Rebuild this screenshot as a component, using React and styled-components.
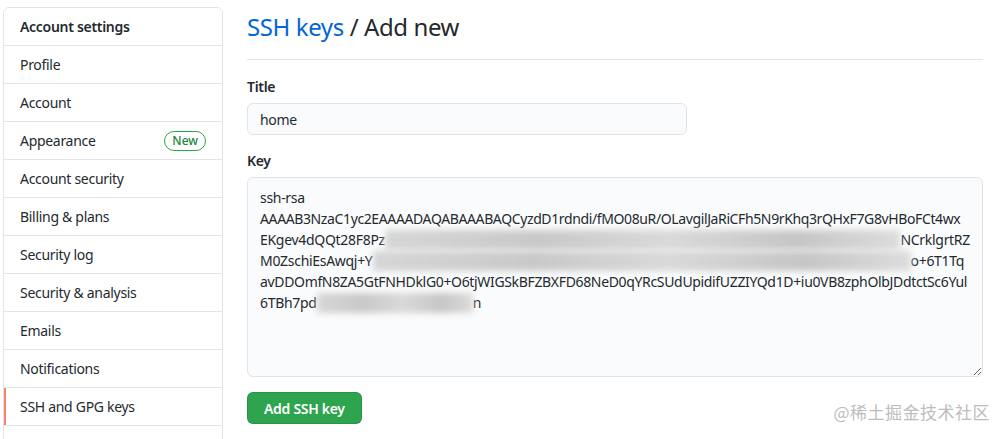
import React from 'react';
import styled, { createGlobalStyle } from 'styled-components';

const GlobalStyle = createGlobalStyle`
  html, body {
    margin: 0;
    padding: 0;
    background: #fff;
  }
  body {
    font-family: "Noto Sans", "Open Sans", "Liberation Sans", sans-serif;
    font-size: 14px;
    letter-spacing: -0.3px;
    color: #24292e;
  }
  * { box-sizing: border-box; }
`;

const menu = [
    'Profile',
    'Account',
    'Appearance',
    'Account security',
    'Billing & plans',
    'Security log',
    'Security & analysis',
    'Emails',
    'Notifications',
    'SSH and GPG keys',
    '',
];

const App = () => {
    return (
        <Page>
            <GlobalStyle />
            <Sidebar>
                <MenuHeading>Account settings</MenuHeading>
                {menu.map((item, i) => (
                    <MenuItem key={i} $selected={item === 'SSH and GPG keys'}>
                        {item}
                        {item === 'Appearance' && <Badge>New</Badge>}
                    </MenuItem>
                ))}
            </Sidebar>

            <Main>
                <Subhead>
                    <Crumb href="#">SSH keys</Crumb> / Add new
                </Subhead>

                <Field>
                    <Label>Title</Label>
                    <Input defaultValue="home" />
                </Field>

                <Field>
                    <Label>Key</Label>
                    <KeyBox>
                        <KeyLine>ssh-rsa</KeyLine>
                        <KeyLine $spacing="-0.38px">AAAAB3NzaC1yc2EAAAADAQABAAABAQCyzdD1rdndi/fMO08uR/OLavgilJaRiCFh5N9rKhq3rQHxF7G8vHBoFCt4wx</KeyLine>
                        <KeyLine>
                            EKgev4dQQt28F8Pz<Blur $w="520px" />NCrklgrtRZ
                        </KeyLine>
                        <KeyLine>
                            M0ZschiEsAwqj+Y<Blur $w="538px" />o+6T1Tq
                        </KeyLine>
                        <KeyLine $spacing="-0.34px">avDDOmfN8ZA5GtFNHDklG0+O6tjWIGSkBFZBXFD68NeD0qYRcSUdUpidifUZZIYQd1D+iu0VB8zphOlbJDdtctSc6Yul</KeyLine>
                        <KeyLine>
                            6TBh7pd<Blur $w="156px" />n
                        </KeyLine>
                    </KeyBox>
                </Field>

                <Button>Add SSH key</Button>
            </Main>

            <Watermark>@稀土掘金技术社区</Watermark>
        </Page>
    );
};

const Page = styled.div`
  position: relative;
  display: flex;
  gap: 24px;
  padding: 7px 22px 0 3px;
  height: 439px;
  overflow: hidden;
`;

const Sidebar = styled.nav`
  width: 220px;
  flex-shrink: 0;
  align-self: flex-start;
  border: 1px solid #e1e4e8;
  border-radius: 6px;
  background: #fff;
`;

const MenuItem = styled.div`
  display: flex;
  align-items: center;
  justify-content: space-between;
  min-height: 38px;
  padding: 8px 16px;
  line-height: 21px;
  border-bottom: 1px solid #e1e4e8;
  color: #24292e;
  box-shadow: ${(p) => (p.$selected ? 'inset 2px 0 0 #f9826c' : 'none')};
`;

const MenuHeading = styled(MenuItem)`
  font-weight: 600;
`;

const Badge = styled.span`
  display: inline-block;
  padding: 0 7px;
  font-size: 12px;
  font-weight: 500;
  letter-spacing: 0;
  line-height: 18px;
  color: #22863a;
  border: 1px solid #28a745;
  border-radius: 2em;
`;

const Main = styled.main`
  flex: 1;
  min-width: 0;
`;

const Subhead = styled.h2`
  margin: 0 0 17px;
  padding-bottom: 12px;
  font-size: 24px;
  font-weight: 400;
  letter-spacing: -0.4px;
  line-height: 40px;
  border-bottom: 1px solid #e1e4e8;
`;

const Crumb = styled.a`
  color: #0366d6;
  text-decoration: none;
`;

const Field = styled.div`
  margin-bottom: 16px;
`;

const Label = styled.label`
  display: block;
  margin-bottom: 6px;
  font-weight: 600;
  line-height: 20px;
`;

const Input = styled.input`
  display: block;
  width: 440px;
  height: 32px;
  padding: 5px 12px;
  font: inherit;
  letter-spacing: inherit;
  color: #24292e;
  background: #fafbfc;
  border: 1px solid #e1e4e8;
  border-radius: 6px;
  outline: none;
`;

const KeyBox = styled.div`
  height: 200px;
  padding: 9px 12px;
  background: #fafbfc;
  border: 1px solid #e1e4e8;
  border-radius: 6px;
  overflow: hidden;
  resize: both;
`;

const KeyLine = styled.div`
  display: flex;
  align-items: center;
  white-space: nowrap;
  line-height: 21px;
  letter-spacing: ${(p) => p.$spacing || 'inherit'};
`;

const Blur = styled.span`
  display: inline-block;
  width: ${(p) => p.$w};
  height: 20px;
  background: linear-gradient(90deg, #d6d6d6, #c9c9c9 30%, #d9d9d9 55%, #c6c6c6 80%, #dcdcdc);
  filter: blur(3px);
`;

const Button = styled.button`
  display: block;
  height: 32px;
  margin-top: -1px;
  padding: 0 16px;
  font: inherit;
  letter-spacing: inherit;
  font-weight: 600;
  color: #fff;
  background: #2ea44f;
  border: 1px solid rgba(27, 31, 35, 0.15);
  border-radius: 6px;
`;

const Watermark = styled.div`
  position: absolute;
  right: 15px;
  bottom: 15px;
  font-family: "Noto Sans CJK SC", sans-serif;
  font-size: 17px;
  letter-spacing: 0.5px;
  color: #bdbdbd;
`;

export default App;
